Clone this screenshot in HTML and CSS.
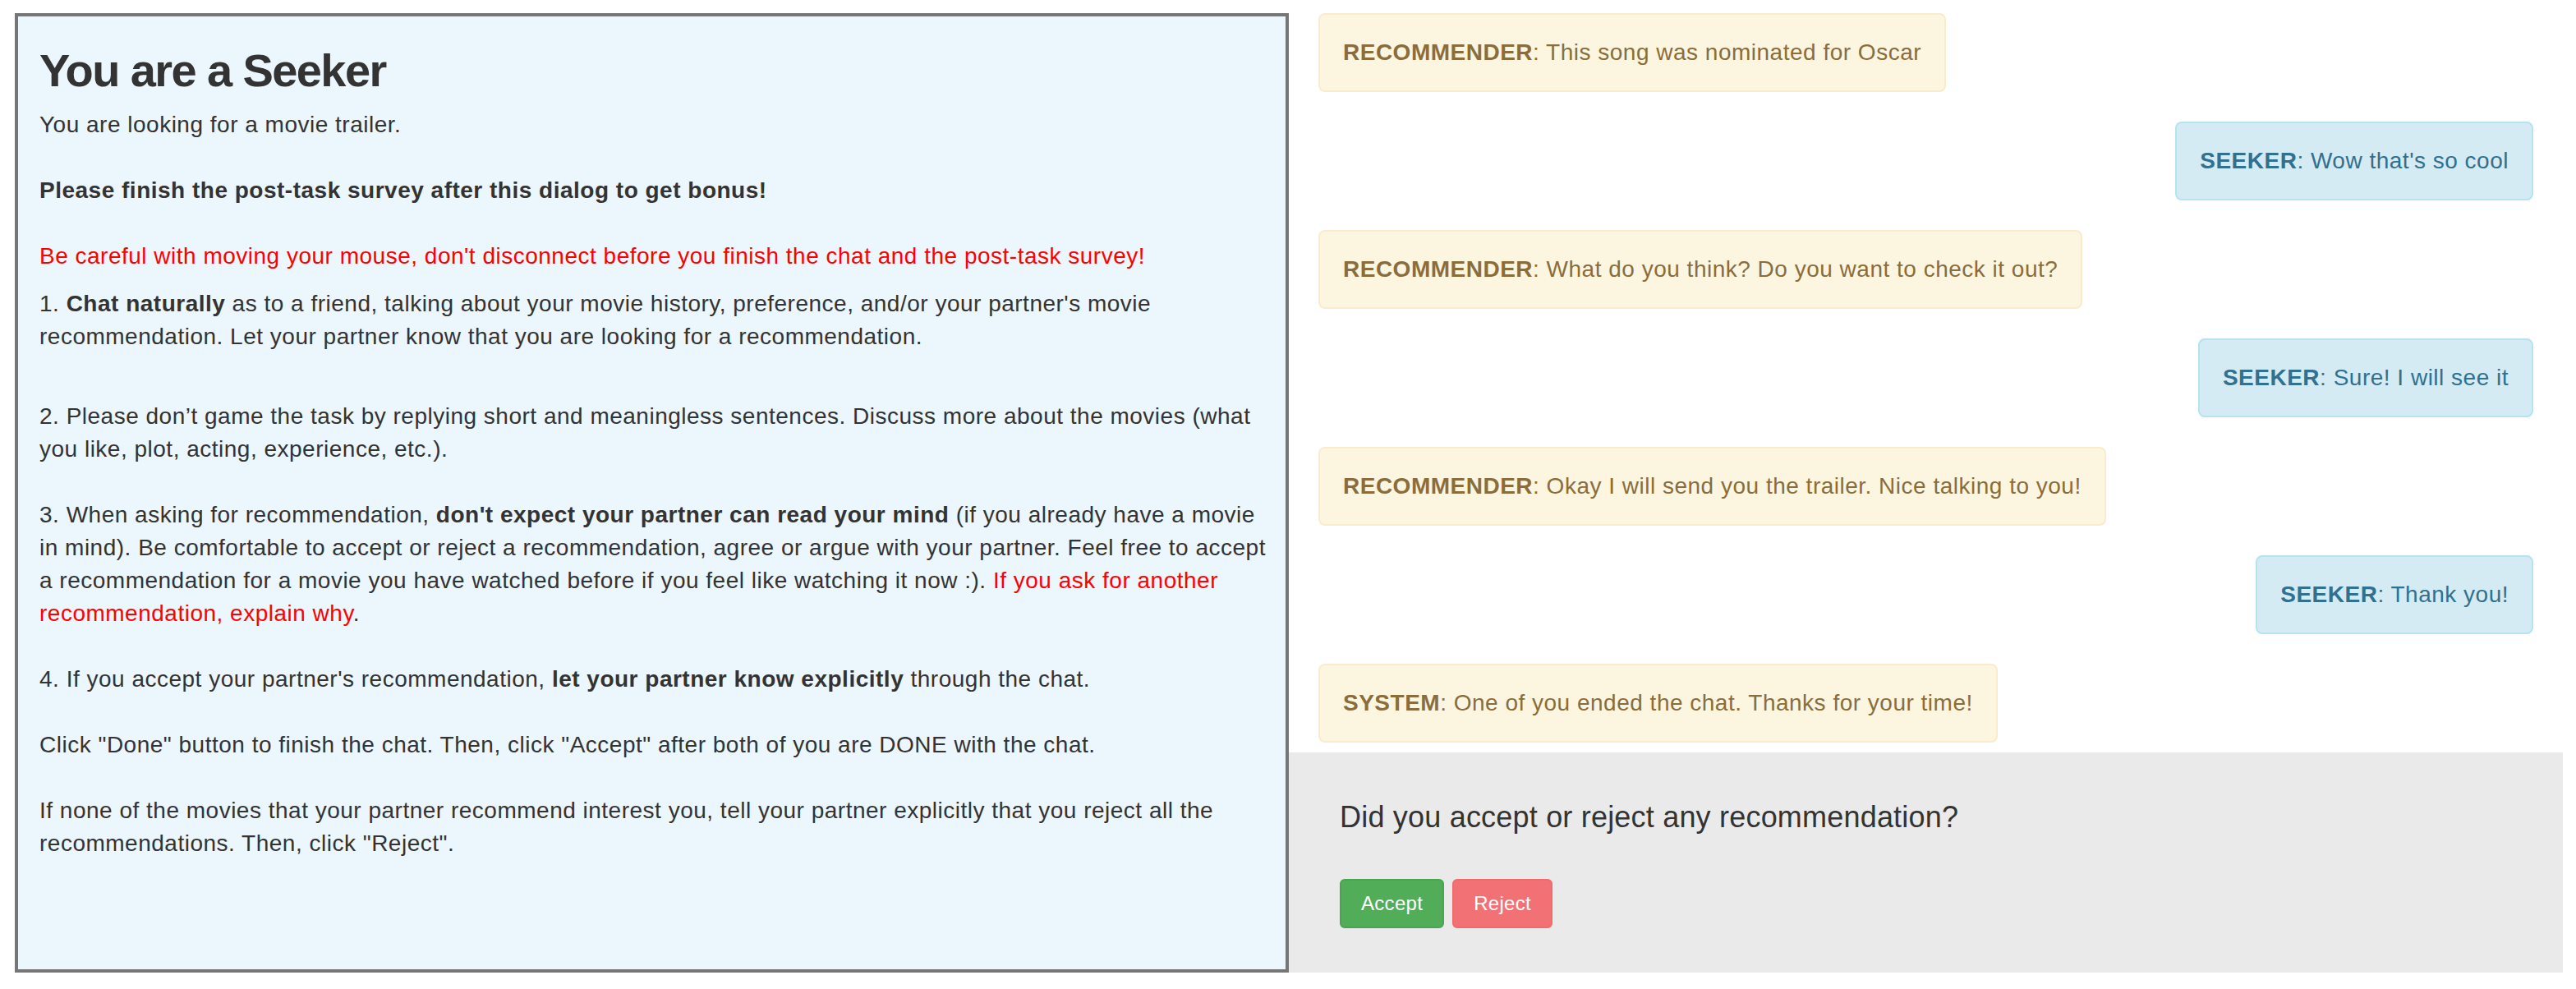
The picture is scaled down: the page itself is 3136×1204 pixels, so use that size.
FILE: index.html
```html
<!doctype html>
<html lang="en">
<head>
    <meta charset="UTF-8">
    <meta name="viewport" content="width=device-width, initial-scale=1.0">
    <title>Movie Dialog - Seeker</title>

    <link rel="stylesheet" href="styles.css">
</head>
<body>
    <div class="page">
        <section class="task">
            <h1>You are a Seeker</h1>
            <p class="intro">You are looking for a movie trailer.</p>
            <p class="gap"><b>Please finish the post-task survey after this dialog to get bonus!</b></p>
            <p class="gap warn">Be careful with moving your mouse, don't disconnect before you finish the chat and the post-task survey!</p>

            <p class="rule-first">1. <b>Chat naturally</b> as to a friend, talking about your movie history, preference, and/or your partner's movie<br>
                recommendation. Let your partner know that you are looking for a recommendation.</p>

            <p class="rule-wide">2. Please don’t game the task by replying short and meaningless sentences. Discuss more about the movies (what<br>
                you like, plot, acting, experience, etc.).</p>

            <p class="gap">3. When asking for recommendation, <b>don't expect your partner can read your mind</b> (if you already have a movie<br>
                in mind). Be comfortable to accept or reject a recommendation, agree or argue with your partner. Feel free to accept<br>
                a recommendation for a movie you have watched before if you feel like watching it now :). <span class="warn">If you ask for another<br>
                recommendation, explain why</span>.</p>

            <p class="gap">4. If you accept your partner's recommendation, <b>let your partner know explicitly</b> through the chat.</p>

            <p class="gap">Click "Done" button to finish the chat. Then, click "Accept" after both of you are DONE with the chat.</p>

            <p class="gap">If none of the movies that your partner recommend interest you, tell your partner explicitly that you reject all the<br>
                recommendations. Then, click "Reject".</p>
        </section>

        <section class="chat">
            <div class="messages">
                <div class="msg recommender"><b>RECOMMENDER</b>: This song was nominated for Oscar</div>
                <div class="msg seeker"><b>SEEKER</b>: Wow that's so cool</div>
                <div class="msg recommender"><b>RECOMMENDER</b>: What do you think? Do you want to check it out?</div>
                <div class="msg seeker"><b>SEEKER</b>: Sure! I will see it</div>
                <div class="msg recommender"><b>RECOMMENDER</b>: Okay I will send you the trailer. Nice talking to you!</div>
                <div class="msg seeker"><b>SEEKER</b>: Thank you!</div>
                <div class="msg recommender"><b>SYSTEM</b>: One of you ended the chat. Thanks for your time!</div>
            </div>

            <div class="survey">
                <h4>Did you accept or reject any recommendation?</h4>
                <div class="actions">
                    <button class="btn btn-accept" type="button">Accept</button>
                    <button class="btn btn-reject" type="button">Reject</button>
                </div>
            </div>
        </section>
    </div>
</body>
</html>
```

FILE: styles.css
```css
body {
    font-family: 'Liberation Sans', Arial, sans-serif;
    font-size: 28px;
    line-height: 40px;
    letter-spacing: 0.5px;
    color: #333;
    margin: 0;
    padding: 0;
}

.page {
    display: grid;
    grid-template-columns: 1fr 1fr;
    padding: 16px 16px 0 18px;
}

/* left: task instructions */
.task {
    background-color: #ebf6fd;
    border: 4px solid #767676;
    padding: 35px 8px 0 26px;
}

.task h1 {
    font-size: 56px;
    line-height: 62px;
    font-weight: 700;
    letter-spacing: -1.6px;
    margin: 0 0 15px 0;
}

.task p {
    margin: 0;
}

.task .gap {
    margin-top: 40px;
}

.task .rule-first {
    margin-top: 18px;
}

.task .rule-wide {
    margin-top: 57px;
}

.warn {
    color: #ff0000;
}

/* right: chat log + survey */
.chat {
    display: flex;
    flex-direction: column;
}

.messages {
    display: flex;
    flex-direction: column;
    align-items: flex-start;
    gap: 36px;
    padding: 0 36px 12px 36px;
}

.msg {
    padding: 26px 28px;
    border: 2px solid;
    border-radius: 8px;
}

.msg.recommender {
    background-color: #fcf6e0;
    border-color: #faebcc;
    color: #8a6d3b;
}

.msg.seeker {
    align-self: flex-end;
    background-color: #d4ebf4;
    border-color: #b6e3ef;
    color: #31708f;
}

.survey {
    flex: 1;
    background-color: #eaeaea;
    padding: 59px 62px 54px 62px;
}

.survey h4 {
    font-size: 36px;
    line-height: 40px;
    font-weight: 400;
    letter-spacing: 0.2px;
    margin: 0 0 55px 0;
}

.actions {
    display: flex;
    gap: 10px;
}

.btn {
    font-family: inherit;
    font-size: 24px;
    line-height: 36px;
    letter-spacing: 0.3px;
    padding: 10px 24px;
    border: 2px solid;
    border-radius: 6px;
    color: #fff;
    cursor: pointer;
}

.btn-accept {
    background-color: #52ad59;
    border-color: #4aa451;
}

.btn-reject {
    background-color: #f27175;
    border-color: #f06a6e;
}
```
